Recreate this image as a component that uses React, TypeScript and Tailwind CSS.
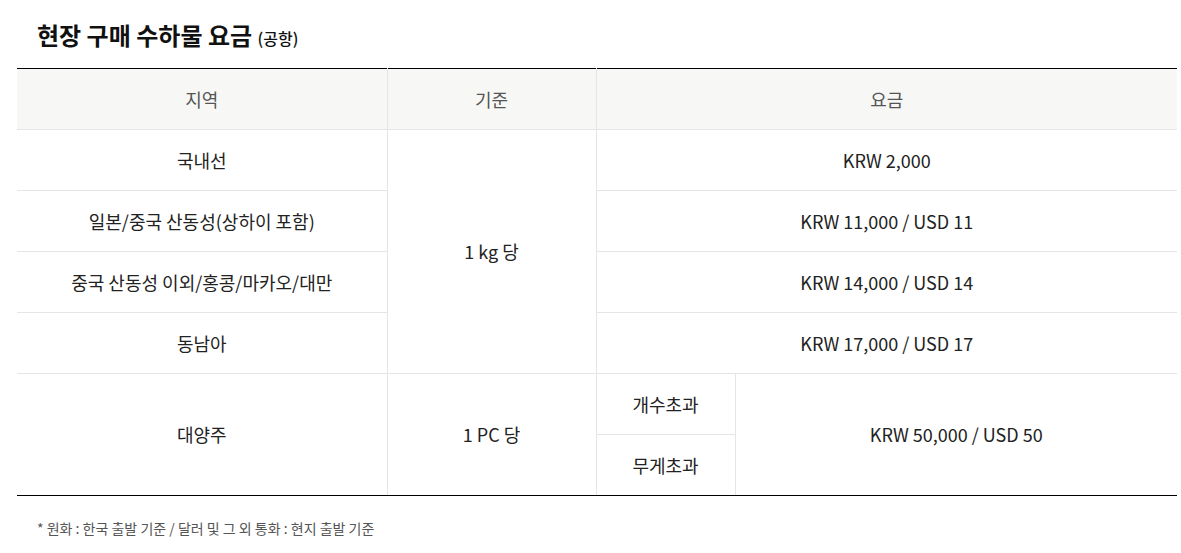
import React from "react";

const font = { fontFamily: '"Noto Sans CJK KR", "Noto Sans", sans-serif' };

export default function App() {
  const td = "border border-[#e5e5e5] h-[61px] text-center text-[18px] text-[#222] p-0";
  return (
    <div className="w-[1181px] h-[553px] bg-white" style={font}>
      <div className="px-[17px] pt-[20px]">
        <h2 className="pl-[20px] text-[24px] font-bold text-[#111] leading-[30px] h-[30px]">
          현장 구매 수하물 요금 <span className="text-[16px] font-medium">(공항)</span>
        </h2>
        <table className="mt-[18px] w-[1160px] border-collapse table-fixed">
          <colgroup>
            <col className="w-[370px]" />
            <col className="w-[209px]" />
            <col className="w-[139px]" />
            <col className="w-[442px]" />
          </colgroup>
          <thead>
            <tr className="bg-[#f7f7f5]">
              <th className={`${td} border-l-0 border-t-black font-normal !text-[#555]`}>지역</th>
              <th className={`${td} border-t-black font-normal !text-[#555]`}>기준</th>
              <th colSpan={2} className={`${td} border-r-0 border-t-black font-normal !text-[#555]`}>요금</th>
            </tr>
          </thead>
          <tbody>
            <tr>
              <td className={`${td} border-l-0`}>국내선</td>
              <td rowSpan={4} className={td}>1 kg 당</td>
              <td colSpan={2} className={`${td} border-r-0`}>KRW 2,000</td>
            </tr>
            <tr>
              <td className={`${td} border-l-0`}>일본/중국 산동성(상하이 포함)</td>
              <td colSpan={2} className={`${td} border-r-0`}>KRW 11,000 / USD 11</td>
            </tr>
            <tr>
              <td className={`${td} border-l-0`}>중국 산동성 이외/홍콩/마카오/대만</td>
              <td colSpan={2} className={`${td} border-r-0`}>KRW 14,000 / USD 14</td>
            </tr>
            <tr>
              <td className={`${td} border-l-0`}>동남아</td>
              <td colSpan={2} className={`${td} border-r-0`}>KRW 17,000 / USD 17</td>
            </tr>
            <tr>
              <td rowSpan={2} className={`${td} border-l-0 border-b-black`}>대양주</td>
              <td rowSpan={2} className={`${td} border-b-black`}>1 PC 당</td>
              <td className={td}>개수초과</td>
              <td rowSpan={2} className={`${td} border-r-0 border-b-black`}>KRW 50,000 / USD 50</td>
            </tr>
            <tr>
              <td className={`${td} border-b-black`}>무게초과</td>
            </tr>
          </tbody>
        </table>
        <p className="pl-[20px] mt-[22px] text-[14px] leading-[20px] text-[#555]">
          * 원화 : 한국 출발 기준 / 달러 및 그 외 통화 : 현지 출발 기준
        </p>
      </div>
    </div>
  );
}
